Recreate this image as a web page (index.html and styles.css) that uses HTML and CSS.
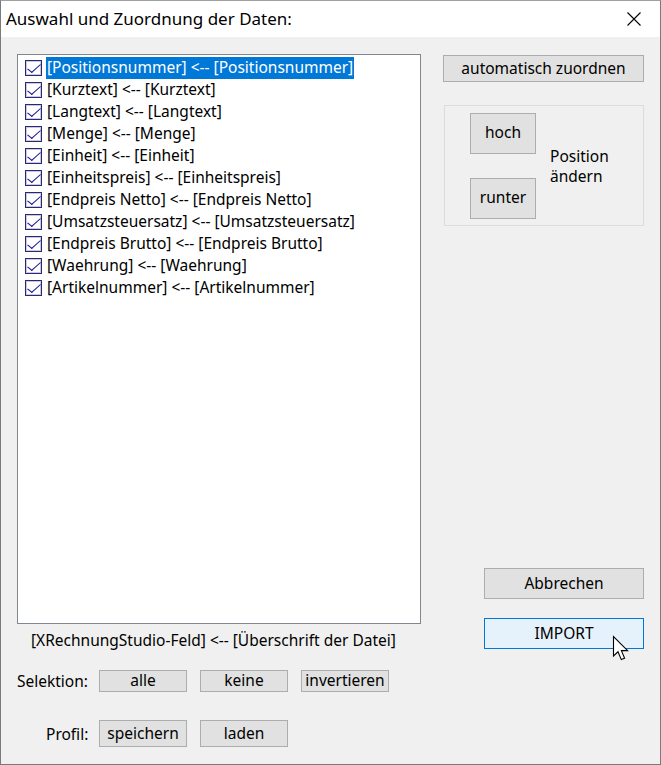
FILE: index.html
```html
<!DOCTYPE html>
<html lang="de">
<head>
<meta charset="utf-8">
<title>Auswahl und Zuordnung der Daten</title>
<link rel="stylesheet" href="styles.css">
</head>
<body>
<div class="window">
  <div class="titlebar">
    <span class="title">Auswahl und Zuordnung der Daten:</span>
    <svg class="close" width="14" height="14" viewBox="0 0 14 14"><path d="M0.5 0.5 L13.5 13.5 M13.5 0.5 L0.5 13.5" stroke="#000" stroke-width="1.1" fill="none"/></svg>
  </div>
  <div class="content">
    <div class="left">
      <ul class="list">
        <li class="item selected"><span class="cb"></span><span class="txt">[Positionsnummer] &lt;-- [Positionsnummer]</span></li>
        <li class="item"><span class="cb"></span><span class="txt">[Kurztext] &lt;-- [Kurztext]</span></li>
        <li class="item"><span class="cb"></span><span class="txt">[Langtext] &lt;-- [Langtext]</span></li>
        <li class="item"><span class="cb"></span><span class="txt">[Menge] &lt;-- [Menge]</span></li>
        <li class="item"><span class="cb"></span><span class="txt">[Einheit] &lt;-- [Einheit]</span></li>
        <li class="item"><span class="cb"></span><span class="txt">[Einheitspreis] &lt;-- [Einheitspreis]</span></li>
        <li class="item"><span class="cb"></span><span class="txt">[Endpreis Netto] &lt;-- [Endpreis Netto]</span></li>
        <li class="item"><span class="cb"></span><span class="txt">[Umsatzsteuersatz] &lt;-- [Umsatzsteuersatz]</span></li>
        <li class="item"><span class="cb"></span><span class="txt">[Endpreis Brutto] &lt;-- [Endpreis Brutto]</span></li>
        <li class="item"><span class="cb"></span><span class="txt">[Waehrung] &lt;-- [Waehrung]</span></li>
        <li class="item"><span class="cb"></span><span class="txt">[Artikelnummer] &lt;-- [Artikelnummer]</span></li>
      </ul>
      <div class="legend">[XRechnungStudio-Feld] &lt;-- [Überschrift der Datei]</div>
      <div class="row sel-row">
        <span class="label">Selektion:</span>
        <button class="btn small">alle</button>
        <button class="btn small">keine</button>
        <button class="btn small">invertieren</button>
      </div>
      <div class="row prof-row">
        <span class="label prof">Profil:</span>
        <button class="btn small tall">speichern</button>
        <button class="btn small tall">laden</button>
      </div>
    </div>
    <div class="right">
      <button class="btn auto">automatisch zuordnen</button>
      <div class="group">
        <div class="updown">
          <button class="btn ud">hoch</button>
          <button class="btn ud">runter</button>
        </div>
        <div class="poslabel"><div>Position</div><div>ändern</div></div>
      </div>
      <div class="spacer"></div>
      <button class="btn action">Abbrechen</button>
      <div class="import-wrap">
        <button class="btn action import">IMPORT</button>
        <svg class="cursor" width="20" height="28" viewBox="0 0 20 28"><path d="M1.5 1.5 L1.5 21 L6 16.8 L9.3 24.6 L12.6 23.2 L9.4 15.6 L15.6 15.6 Z" fill="#fff" stroke="#000" stroke-width="1.1" stroke-linejoin="miter"/></svg>
      </div>
    </div>
  </div>
</div>
</body>
</html>
```
FILE: styles.css
```css
* { box-sizing: border-box; }
html, body { margin: 0; padding: 0; }
body {
  width: 661px;
  height: 765px;
  overflow: hidden;
  font-family: "Noto Sans", "Open Sans", sans-serif;
  font-size: 15.5px;
  color: #000;
}
.window {
  width: 661px;
  height: 765px;
  background: #f0f0f0;
  border: 1px solid #7a7a7a;
  border-top-color: #a0a0a0;
  display: flex;
  flex-direction: column;
}
.titlebar {
  height: 36px;
  background: #fff;
  display: flex;
  align-items: center;
  justify-content: space-between;
  padding: 0 19px 0 5px;
  flex: none;
}
.title {
  font-size: 17px;
  margin-top: -1px;
}
.close { display: block; margin-top: -1px; }
.content {
  flex: 1;
  display: flex;
  padding-left: 16px;
}
.left {
  width: 404px;
  display: flex;
  flex-direction: column;
}
.list {
  list-style: none;
  margin: 17px 0 0 0;
  padding: 2px 0 0 7px;
  width: 404px;
  height: 570px;
  background: #fff;
  border: 1px solid #828790;
}
.item {
  height: 22px;
  display: flex;
  align-items: center;
}
.cb {
  width: 17px;
  height: 16px;
  margin-right: 4px;
  flex: none;
  border: 1px solid #2a2a6a;
  background: #fff;
  box-shadow: inset 0 0 0 1px #c8c8e8;
  position: relative;
}
.cb::after {
  content: "";
  position: absolute;
  left: 4.5px;
  top: 0px;
  width: 5px;
  height: 11px;
  border-right: 1.8px solid #16169a;
  border-bottom: 1.8px solid #16169a;
  transform: rotate(38deg) skewX(-10deg);
}
.txt {
  height: 22px;
  line-height: 21px;
  padding: 0 1px;
  white-space: nowrap;
}
.selected .txt {
  background: #0078d7;
  color: #fff;
}
.legend {
  margin: 5px 0 0 14px;
  height: 22px;
  line-height: 22px;
}
.row {
  display: flex;
  align-items: center;
}
.sel-row { margin-top: 19px; }
.prof-row { margin-top: 28px; }
.label {
  width: 82px;
  padding-left: 0px;
}
.label.prof { padding-left: 29px; }
.btn {
  font-family: inherit;
  font-size: 15.5px;
  color: #000;
  background: #e1e1e1;
  border: 1px solid #adadad;
  padding: 0;
  margin: 0;
  line-height: 1;
}
.small {
  width: 88px;
  height: 22px;
  margin-right: 13px;
}
.small.tall { height: 27px; }
.right {
  width: 201px;
  margin-left: 22px;
  display: flex;
  flex-direction: column;
}
.auto {
  margin-top: 18px;
  width: 201px;
  height: 27px;
}
.group {
  margin: 23px 0 0 1px;
  width: 200px;
  height: 121px;
  border: 1px solid #dcdcdc;
  display: flex;
  align-items: center;
}
.updown {
  margin-left: 25px;
  display: flex;
  flex-direction: column;
  gap: 24px;
}
.ud {
  width: 66px;
  height: 41px;
}
.poslabel {
  margin-left: 14px;
  padding-top: 1px;
  display: flex;
  flex-direction: column;
}
.poslabel div {
  height: 20px;
  line-height: 20px;
}
.spacer { height: 342px; flex: none; }
.action {
  margin-left: 41px;
  width: 160px;
  height: 31px;
}
.import-wrap {
  position: relative;
  margin-top: 19px;
}
.import {
  background: #e5f1fb;
  border-color: #0078d7;
  display: block;
}
.cursor {
  position: absolute;
  left: 169px;
  top: 17px;
}
```
